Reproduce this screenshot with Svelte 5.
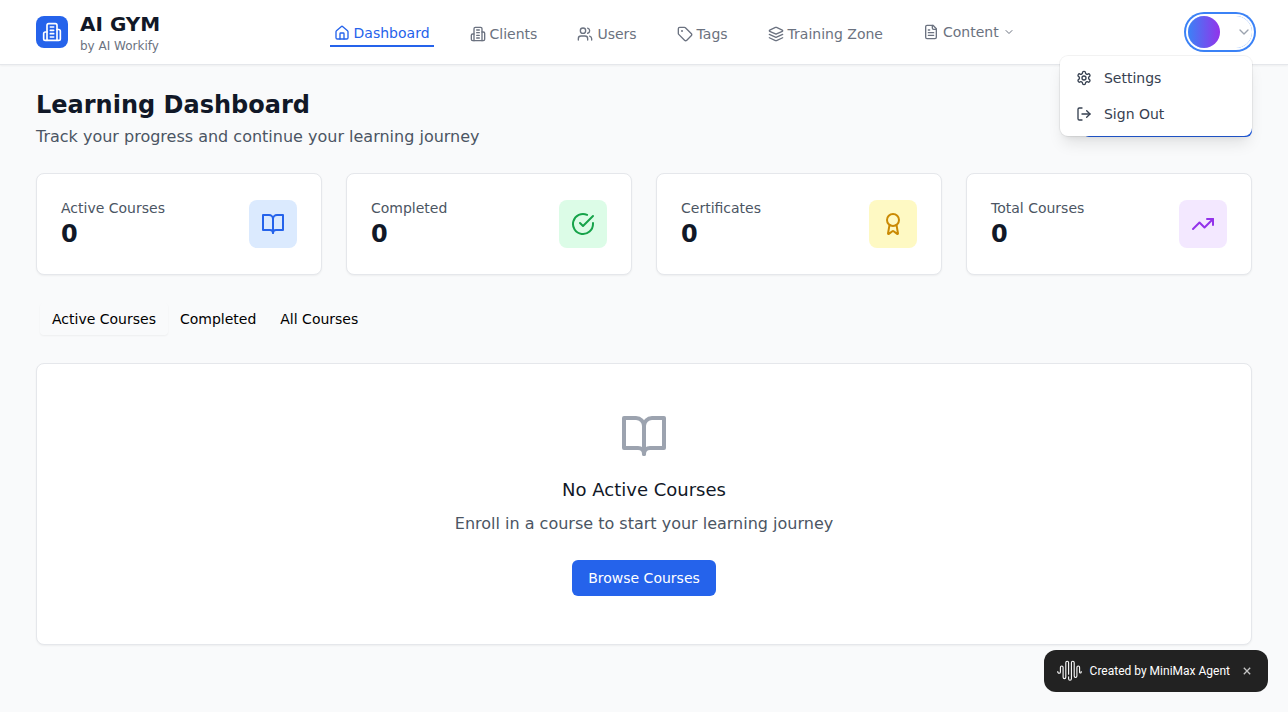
<script>
  const icons = {
    building: ['M6 22V4a2 2 0 0 1 2-2h8a2 2 0 0 1 2 2v18Z', 'M6 12H4a2 2 0 0 0-2 2v6a2 2 0 0 0 2 2h2', 'M18 9h2a2 2 0 0 1 2 2v9a2 2 0 0 1-2 2h-2', 'M10 6h4', 'M10 10h4', 'M10 14h4', 'M10 18h4'],
    home: ['M15 21v-8a1 1 0 0 0-1-1h-4a1 1 0 0 0-1 1v8', 'M3 10a2 2 0 0 1 .709-1.528l7-5.999a2 2 0 0 1 2.582 0l7 5.999A2 2 0 0 1 21 10v9a2 2 0 0 1-2 2H5a2 2 0 0 1-2-2z'],
    users: ['M16 21v-2a4 4 0 0 0-4-4H6a4 4 0 0 0-4 4v2', 'M5 7a4 4 0 1 0 8 0a4 4 0 1 0-8 0', 'M22 21v-2a4 4 0 0 0-3-3.87', 'M16 3.13a4 4 0 0 1 0 7.75'],
    tag: ['M12.586 2.586A2 2 0 0 0 11.172 2H4a2 2 0 0 0-2 2v7.172a2 2 0 0 0 .586 1.414l8.704 8.704a2.426 2.426 0 0 0 3.42 0l6.58-6.58a2.426 2.426 0 0 0 0-3.42z', 'M7 7.5a.5.5 0 1 0 1 0a.5.5 0 1 0-1 0'],
    layers: ['m12.83 2.18a2 2 0 0 0-1.66 0L2.6 6.08a1 1 0 0 0 0 1.83l8.58 3.91a2 2 0 0 0 1.66 0l8.58-3.9a1 1 0 0 0 0-1.83Z', 'm22 17.65-9.17 4.16a2 2 0 0 1-1.66 0L2 17.65', 'm22 12.65-9.17 4.16a2 2 0 0 1-1.66 0L2 12.65'],
    file: ['M15 2H6a2 2 0 0 0-2 2v16a2 2 0 0 0 2 2h12a2 2 0 0 0 2-2V7Z', 'M14 2v4a2 2 0 0 0 2 2h4', 'M10 9H8', 'M16 13H8', 'M16 17H8'],
    chevron: ['m6 9 6 6 6-6'],
    settings: ['M12.22 2h-.44a2 2 0 0 0-2 2v.18a2 2 0 0 1-1 1.73l-.43.25a2 2 0 0 1-2 0l-.15-.08a2 2 0 0 0-2.73.73l-.22.38a2 2 0 0 0 .73 2.73l.15.1a2 2 0 0 1 1 1.72v.51a2 2 0 0 1-1 1.74l-.15.09a2 2 0 0 0-.73 2.73l.22.38a2 2 0 0 0 2.73.73l.15-.08a2 2 0 0 1 2 0l.43.25a2 2 0 0 1 1 1.73V20a2 2 0 0 0 2 2h.44a2 2 0 0 0 2-2v-.18a2 2 0 0 1 1-1.73l.43-.25a2 2 0 0 1 2 0l.15.08a2 2 0 0 0 2.73-.73l.22-.39a2 2 0 0 0-.73-2.73l-.15-.08a2 2 0 0 1-1-1.74v-.5a2 2 0 0 1 1-1.74l.15-.09a2 2 0 0 0 .73-2.73l-.22-.38a2 2 0 0 0-2.73-.73l-.15.08a2 2 0 0 1-2 0l-.43-.25a2 2 0 0 1-1-1.73V4a2 2 0 0 0-2-2z', 'M9 12a3 3 0 1 0 6 0a3 3 0 1 0-6 0'],
    logout: ['M9 21H5a2 2 0 0 1-2-2V5a2 2 0 0 1 2-2h4', 'm16 17 5-5-5-5', 'M21 12H9'],
    book: ['M2 3h6a4 4 0 0 1 4 4v14a3 3 0 0 0-3-3H2z', 'M22 3h-6a4 4 0 0 0-4 4v14a3 3 0 0 1 3-3h7z'],
    check: ['M22 11.08V12a10 10 0 1 1-5.93-9.14', 'm9 11 3 3L22 4'],
    award: ['m15.477 12.89 1.515 8.526a.5.5 0 0 1-.81.47l-3.58-2.687a1 1 0 0 0-1.197 0l-3.586 2.686a.5.5 0 0 1-.81-.469l1.514-8.526', 'M6 8a6 6 0 1 0 12 0a6 6 0 1 0-12 0'],
    trend: ['m22 7-8.5 8.5-5-5L2 17', 'M16 7h6v6']
  };

  const links = [
    { label: 'Dashboard', icon: 'home', active: true },
    { label: 'Clients', icon: 'building' },
    { label: 'Users', icon: 'users' },
    { label: 'Tags', icon: 'tag' },
    { label: 'Training Zone', icon: 'layers' }
  ];

  const stats = [
    { label: 'Active Courses', value: 0, icon: 'book', tone: 'blue' },
    { label: 'Completed', value: 0, icon: 'check', tone: 'green' },
    { label: 'Certificates', value: 0, icon: 'award', tone: 'yellow' },
    { label: 'Total Courses', value: 0, icon: 'trend', tone: 'purple' }
  ];

  const tabs = ['Active Courses', 'Completed', 'All Courses'];
  let activeTab = $state('Active Courses');
</script>

{#snippet icon(name, size)}
  <svg width={size} height={size} viewBox="0 0 24 24" fill="none" stroke="currentColor" stroke-width="2" stroke-linecap="round" stroke-linejoin="round" aria-hidden="true">
    {#each icons[name] as d}<path {d} />{/each}
  </svg>
{/snippet}

<div class="page">
  <header>
    <div class="bar">
      <div class="brand">
        <div class="mark">{@render icon('building', 20)}</div>
        <div>
          <div class="name">AI GYM</div>
          <div class="by">by AI Workify</div>
        </div>
      </div>
      <nav>
        {#each links as link}
          <a href="#top" class:active={link.active}>{@render icon(link.icon, 16)}<span>{link.label}</span></a>
        {/each}
        <button class="content">{@render icon('file', 16)}<span>Content</span>{@render icon('chevron', 12)}</button>
      </nav>
      <div class="account">
        <button class="user" aria-label="Account">
          <span class="avatar"></span>
          {@render icon('chevron', 16)}
        </button>
        <div class="menu">
          <button>{@render icon('settings', 16)}Settings</button>
          <button>{@render icon('logout', 16)}Sign Out</button>
        </div>
      </div>
    </div>
  </header>

  <main>
    <div class="heading">
      <div>
        <h1>Learning Dashboard</h1>
        <p>Track your progress and continue your learning journey</p>
      </div>
      <button class="action" aria-label="Browse"></button>
    </div>

    <section class="stats">
      {#each stats as s}
        <div class="card stat">
          <div>
            <div class="label">{s.label}</div>
            <div class="value">{s.value}</div>
          </div>
          <div class="tile {s.tone}">{@render icon(s.icon, 24)}</div>
        </div>
      {/each}
    </section>

    <div class="tabs">
      {#each tabs as tab}
        <button class:selected={tab === activeTab} onclick={() => (activeTab = tab)}>{tab}</button>
      {/each}
    </div>

    <section class="card empty">
      {@render icon('book', 48)}
      <h3>No Active Courses</h3>
      <p>Enroll in a course to start your learning journey</p>
      <button class="browse">Browse Courses</button>
    </section>
  </main>

  <div class="badge">
    <svg width="25" height="22" viewBox="0 0 25 22" fill="none" stroke="#fff" stroke-width="1.1" stroke-linecap="round" aria-hidden="true">
      <path d="M.8 11.6v.3a1.3 1.3 0 0 0 2.6 0V7.4a1.35 1.35 0 0 1 2.7 0v9.9a1.35 1.35 0 0 0 2.7 0V2.7a1.4 1.4 0 0 1 2.8 0v11.5M14.4 7v-4.3M11.6 16.8v2a1.4 1.4 0 0 0 2.8 0V2.7a1.4 1.4 0 0 1 2.8 0v13.4a1.35 1.35 0 0 0 2.7 0V7.4a1.35 1.35 0 0 1 2.7 0v4.8a.8.8 0 0 0 1.6 0v-.6" />
    </svg>
    <span>Created by MiniMax Agent</span>
    <button aria-label="Close">
      <svg width="8" height="8" viewBox="0 0 8 8" stroke="#c4c4c4" stroke-width="1.3" aria-hidden="true"><path d="m.8.8 6.4 6.4M7.2.8.8 7.2" /></svg>
    </button>
  </div>
</div>

<style>
  :global(body) { margin: 0; overflow: hidden; }
  * { box-sizing: border-box; }
  .page { height: 712px; background: #f9fafb; color: #111827; font: 14px/20px "DejaVu Sans", sans-serif; }
  button { border: 0; padding: 0; background: none; font: inherit; color: inherit; }
  svg { display: block; flex: none; }
  h1, h3, p { margin: 0; }

  header { height: 65px; background: #fff; border-bottom: 1px solid #e5e7eb; box-shadow: 0 1px 2px rgb(0 0 0 / .05); }
  .bar { height: 64px; margin: 0 36px; display: flex; align-items: center; justify-content: space-between; }
  .brand { display: flex; align-items: center; gap: 12px; }
  .mark { width: 32px; height: 32px; border-radius: 8px; background: #2563eb; color: #fff; display: grid; place-items: center; }
  .name { font-size: 20px; line-height: 28px; font-weight: 700; }
  .by { font-size: 12px; line-height: 16px; color: #6b7280; }

  nav { display: flex; align-items: center; gap: 32px; color: #6b7280; }
  nav a, .content { display: flex; align-items: center; gap: 4px; padding: 4px 4px 0; color: inherit; text-decoration: none; }
  nav a.active { height: 30px; padding: 4px 4px 0; color: #2563eb; border-bottom: 2px solid #2563eb; }
  .content { padding: 0 4px; }

  .account { position: relative; }
  .user { display: flex; align-items: center; gap: 16px; border-radius: 999px; color: #9ca3af; box-shadow: 0 0 0 2px #fff, 0 0 0 4px #3b82f6; }
  .avatar { width: 32px; height: 32px; border-radius: 50%; background: linear-gradient(to right, #3b82f6, #9333ea); }
  .menu { position: absolute; z-index: 5; top: 40px; right: 0; width: 192px; padding: 4px 0; border-radius: 8px; background: #fff; box-shadow: 0 0 0 1px rgb(0 0 0 / .05), 0 10px 15px -3px rgb(0 0 0 / .1), 0 4px 6px -4px rgb(0 0 0 / .1); }
  .menu button { width: 100%; height: 36px; padding: 0 16px; display: flex; align-items: center; gap: 12px; color: #374151; }

  main { padding: 24px 36px 0; }
  .heading { display: flex; align-items: center; justify-content: space-between; }
  h1 { font-size: 24px; line-height: 32px; font-weight: 700; }
  .heading p { margin-top: 4px; font-size: 16px; line-height: 24px; color: #4b5563; }
  .action { width: 169px; height: 36px; border-radius: 6px; background: #2563eb; }

  .card { background: #fff; border: 1px solid #e5e7eb; border-radius: 8px; box-shadow: 0 1px 2px rgb(0 0 0 / .05); }
  .stats { margin-top: 24px; display: grid; grid-template-columns: repeat(4, 1fr); gap: 24px; }
  .stat { padding: 24px; display: flex; align-items: center; justify-content: space-between; }
  .label { color: #4b5563; }
  .value { font-size: 24px; line-height: 32px; font-weight: 700; }
  .tile { width: 48px; height: 48px; border-radius: 8px; display: grid; place-items: center; }
  .blue { background: #dbeafe; color: #2563eb; }
  .green { background: #dcfce7; color: #16a34a; }
  .yellow { background: #fef9c3; color: #ca8a04; }
  .purple { background: #f3e8ff; color: #9333ea; }

  .tabs { margin-top: 24px; height: 40px; padding: 4px; display: flex; color: #000; }
  .tabs button { padding: 6px 12px; border-radius: 4px; }
  .tabs .selected { box-shadow: 0 1px 2px rgb(0 0 0 / .05); }

  .empty { margin-top: 24px; padding: 48px; display: flex; flex-direction: column; align-items: center; color: #9ca3af; }
  h3 { margin-top: 16px; font-size: 18px; line-height: 28px; font-weight: 400; color: #111827; }
  .empty p { margin-top: 8px; font-size: 16px; line-height: 24px; color: #4b5563; }
  .browse { margin-top: 24px; height: 36px; padding: 0 16px; border-radius: 6px; background: #2563eb; color: #fff; }

  .badge { position: fixed; right: 20px; bottom: 20px; width: 224px; height: 42px; padding-left: 13px; display: flex; align-items: center; border-radius: 12px; background: #222; color: #fff; font: 12px/16px Roboto, sans-serif; }
  .badge span { margin-left: 7.6px; }
  .badge button { margin-left: 13px; }
</style>
